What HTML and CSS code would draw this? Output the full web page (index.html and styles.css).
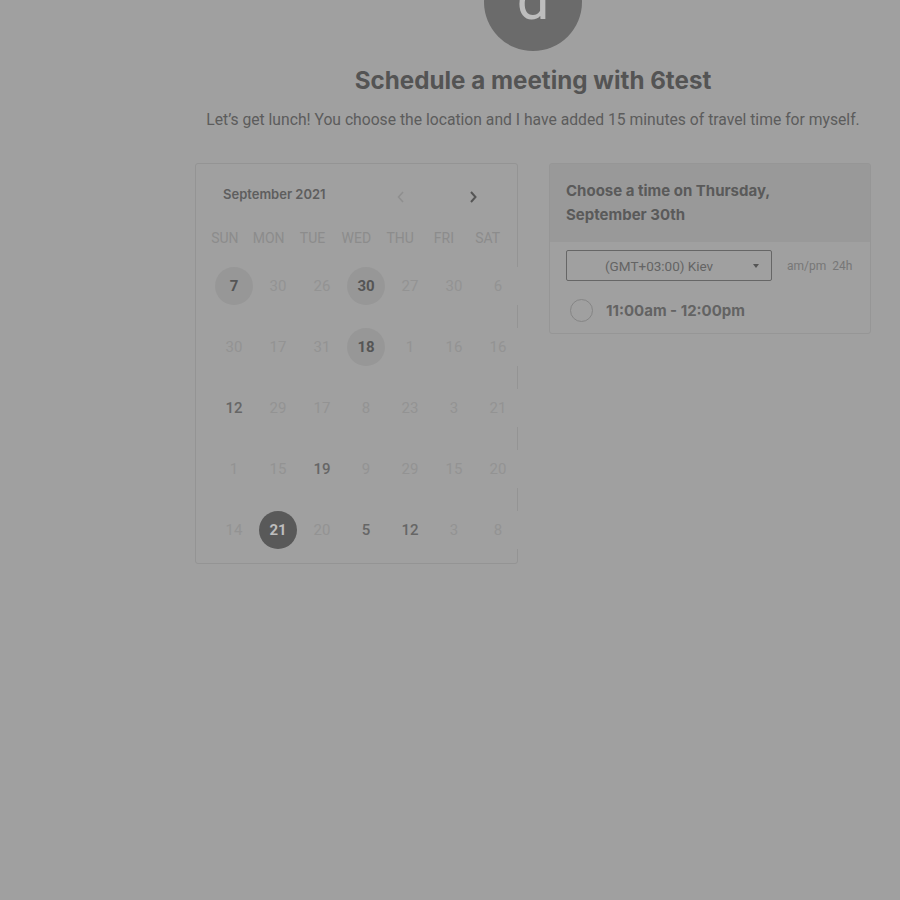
FILE: index.html
```html
<!DOCTYPE html>
<html>
<head>
<meta charset="utf-8">
<link rel="stylesheet" href="styles.css">
</head>
<body>
<div class="main">
  <div class="avatar"><span>d</span></div>
  <h1 class="title">Schedule a meeting with 6test</h1>
  <p class="subtitle">Let’s get lunch! You choose the location and I have added 15 minutes of travel time for myself.</p>
  <div class="cards">
    <div class="calendar">
      <div class="cal-head">
        <span class="month">September 2021</span>
        <span class="arrows">
          <svg class="arrow prev" width="10" height="14" viewBox="0 0 10 14"><path d="M7 2 L2.5 7 L7 12" fill="none" stroke="currentColor" stroke-width="1.6"/></svg>
          <svg class="arrow next" width="10" height="14" viewBox="0 0 10 14"><path d="M3 2 L7.5 7 L3 12" fill="none" stroke="currentColor" stroke-width="2"/></svg>
        </span>
      </div>
      <div class="dow">
        <span>SUN</span><span>MON</span><span>TUE</span><span>WED</span><span>THU</span><span>FRI</span><span>SAT</span>
      </div>
      <div class="days">
        <div class="day"><span class="c avail">7</span></div>
        <div class="day"><span class="c">30</span></div>
        <div class="day"><span class="c">26</span></div>
        <div class="day"><span class="c avail">30</span></div>
        <div class="day"><span class="c">27</span></div>
        <div class="day"><span class="c">30</span></div>
        <div class="day"><span class="c">6</span></div>

        <div class="day"><span class="c">30</span></div>
        <div class="day"><span class="c">17</span></div>
        <div class="day"><span class="c">31</span></div>
        <div class="day"><span class="c avail">18</span></div>
        <div class="day"><span class="c">1</span></div>
        <div class="day"><span class="c">16</span></div>
        <div class="day"><span class="c">16</span></div>

        <div class="day"><span class="c bold">12</span></div>
        <div class="day"><span class="c">29</span></div>
        <div class="day"><span class="c">17</span></div>
        <div class="day"><span class="c">8</span></div>
        <div class="day"><span class="c">23</span></div>
        <div class="day"><span class="c">3</span></div>
        <div class="day"><span class="c">21</span></div>

        <div class="day"><span class="c">1</span></div>
        <div class="day"><span class="c">15</span></div>
        <div class="day"><span class="c bold">19</span></div>
        <div class="day"><span class="c">9</span></div>
        <div class="day"><span class="c">29</span></div>
        <div class="day"><span class="c">15</span></div>
        <div class="day"><span class="c">20</span></div>

        <div class="day"><span class="c">14</span></div>
        <div class="day"><span class="c selected">21</span></div>
        <div class="day"><span class="c">20</span></div>
        <div class="day"><span class="c bold">5</span></div>
        <div class="day"><span class="c bold">12</span></div>
        <div class="day"><span class="c">3</span></div>
        <div class="day"><span class="c">8</span></div>
      </div>
    </div>
    <div class="times">
      <div class="times-head">Choose a time on Thursday,<br>September 30th</div>
      <div class="times-body">
        <div class="tz-row">
          <div class="select"><span>(GMT+03:00) Kiev</span><span class="caret"></span></div>
          <span class="fmt">am/pm&nbsp;&nbsp;24h</span>
        </div>
        <div class="slot">
          <span class="radio"></span>
          <span class="slot-text">11:00am - 12:00pm</span>
        </div>
      </div>
    </div>
  </div>
</div>
</body>
</html>
```
FILE: styles.css
```css
html, body {
  margin: 0;
  padding: 0;
  background: #a0a0a0;
}
body {
  font-family: Roboto, "Liberation Sans", sans-serif;
  color: #5a5a5a;
  height: 900px;
  overflow: hidden;
}
.main {
  margin-left: 195px;
  width: 676px;
  display: flex;
  flex-direction: column;
  align-items: center;
}
.avatar {
  width: 98px;
  height: 98px;
  border-radius: 50%;
  background: #6b6b6b;
  margin-top: -47px;
  display: flex;
  align-items: center;
  justify-content: center;
}
.avatar span {
  font-family: Roboto, sans-serif;
  font-size: 58px;
  color: #bdbdbd;
  line-height: 1;
  margin-top: -6px;
}
.title {
  font-family: Inter, sans-serif;
  font-weight: 700;
  font-size: 24.2px;
  line-height: 30px;
  margin: 15px 0 0;
  color: #545454;
}
.subtitle {
  font-family: Roboto, sans-serif;
  font-size: 15.7px;
  line-height: 20px;
  margin: 14px 0 0;
  color: #5c5c5c;
  white-space: nowrap;
}
.cards {
  align-self: stretch;
  display: flex;
  align-items: flex-start;
  gap: 31px;
  margin-top: 33px;
}
.calendar {
  box-sizing: border-box;
  width: 323px;
  height: 401px;
  border: 1px solid #949494;
  border-radius: 3px;
  padding: 16px 0 0 16px;
}
.cal-head {
  display: flex;
  align-items: center;
  height: 30px;
  padding-left: 11px;
}
.month {
  font-family: Inter, sans-serif;
  font-weight: 600;
  font-size: 13px;
  color: #5e5e5e;
  margin-top: -2px;
}
.arrows {
  display: flex;
  align-items: center;
  margin-left: 70px;
  gap: 62px;
  margin-top: 4px;
}
.arrow.prev { color: #8f8f8f; }
.arrow.next { color: #555555; }
.dow {
  display: grid;
  grid-template-columns: repeat(7, 43.8px);
  margin: 18px 0 0 -9px;
  height: 20px;
  align-items: center;
}
.dow span {
  text-align: center;
  font-size: 14px;
  color: #8c8c8c;
}
.days {
  display: grid;
  grid-template-columns: repeat(7, 44px);
  grid-auto-rows: 61px;
  margin-top: 7px;
}
.day {
  align-self: center;
  height: 38px;
  background: #a0a0a0;
  display: flex;
  align-items: center;
  justify-content: center;
}
.c {
  width: 38px;
  height: 38px;
  border-radius: 50%;
  display: flex;
  align-items: center;
  justify-content: center;
  font-size: 15px;
  color: #939393;
}
.c.avail {
  background: #979797;
  color: #555555;
  font-weight: 700;
}
.c.bold {
  color: #666666;
  font-weight: 500;
}
.c.selected {
  background: #595959;
  color: #bdbdbd;
  font-weight: 700;
}
.times {
  box-sizing: border-box;
  width: 322px;
  border: 1px solid #969696;
  border-radius: 3px;
  overflow: hidden;
}
.times-head {
  background: #999999;
  padding: 15px 16px;
  font-family: Inter, sans-serif;
  font-weight: 700;
  font-size: 15px;
  line-height: 24px;
  color: #5a5a5a;
}
.times-body {
  padding: 8px 16px 8px;
}
.tz-row {
  display: flex;
  align-items: center;
  gap: 15px;
}
.select {
  box-sizing: border-box;
  width: 206px;
  height: 31px;
  border: 1px solid #666666;
  border-radius: 2px;
  display: flex;
  align-items: center;
  padding: 0 12px 0 38px;
  font-size: 13.5px;
  color: #646464;
}
.select span:first-child { flex: 1; }
.caret {
  width: 0;
  height: 0;
  border-left: 3.5px solid transparent;
  border-right: 3.5px solid transparent;
  border-top: 4px solid #555555;
}
.fmt {
  font-size: 12px;
  color: #777777;
}
.slot {
  display: flex;
  align-items: center;
  height: 30px;
  margin-top: 14px;
  padding-left: 4px;
  gap: 13px;
}
.radio {
  box-sizing: border-box;
  width: 23px;
  height: 23px;
  border-radius: 50%;
  border: 1.5px solid #858585;
}
.slot-text {
  font-family: Inter, sans-serif;
  font-weight: 700;
  font-size: 15px;
  color: #636363;
}
```
